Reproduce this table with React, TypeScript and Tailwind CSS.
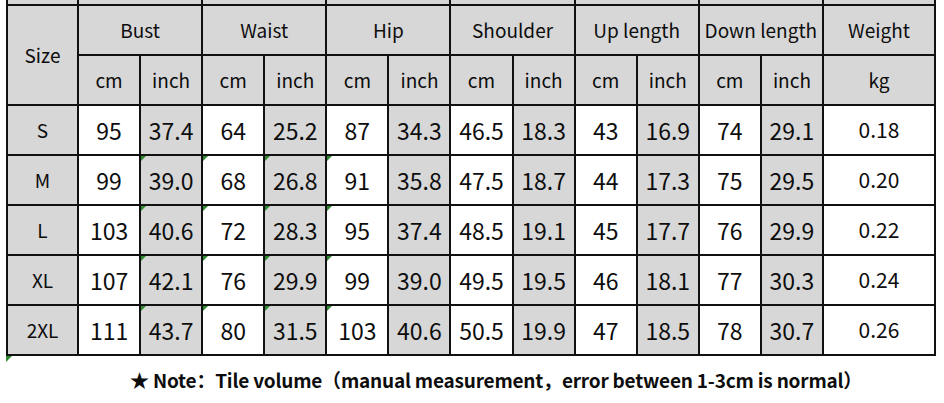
import React from "react";

const groups = ["Bust", "Waist", "Hip", "Shoulder", "Up length", "Down length"];

const rows: [string, string[], string][] = [
  ["S", ["95", "37.4", "64", "25.2", "87", "34.3", "46.5", "18.3", "43", "16.9", "74", "29.1"], "0.18"],
  ["M", ["99", "39.0", "68", "26.8", "91", "35.8", "47.5", "18.7", "44", "17.3", "75", "29.5"], "0.20"],
  ["L", ["103", "40.6", "72", "28.3", "95", "37.4", "48.5", "19.1", "45", "17.7", "76", "29.9"], "0.22"],
  ["XL", ["107", "42.1", "76", "29.9", "99", "39.0", "49.5", "19.5", "46", "18.1", "77", "30.3"], "0.24"],
  ["2XL", ["111", "43.7", "80", "31.5", "103", "40.6", "50.5", "19.9", "47", "18.5", "78", "30.7"], "0.26"],
];

const font = { fontFamily: '"Noto Sans CJK SC", "Noto Sans", sans-serif' };

function Tri() {
  return (
    <span className="absolute left-0 top-0 w-0 h-0 border-t-[5px] border-r-[5px] border-t-[#2f8a2f] border-r-transparent" />
  );
}

export default function App() {
  return (
    <div className="w-[944px] h-[403px] bg-white text-[#0d0d0d]" style={font}>
      <div className="ml-[6px] w-[930px] grid grid-cols-[69px_repeat(12,60.08px)_110px] grid-rows-[4px_repeat(7,48px)] gap-[2px] bg-[#111] px-[2px] pb-[2px]">
        {/* cut-off strip at top */}
        <div className="bg-[#d7d7d7]" />
        {groups.map((g) => (
          <div key={"t" + g} className="col-span-2 bg-[#d7d7d7]" />
        ))}
        <div className="bg-[#d7d7d7]" />

        {/* header row 1 */}
        <div className="row-span-2 bg-[#d7d7d7] flex items-center justify-center text-[19px]">Size</div>
        {groups.map((g) => (
          <div key={g} className="col-span-2 bg-[#d7d7d7] flex items-center justify-center text-[19px] whitespace-nowrap">
            {g}
          </div>
        ))}
        <div className="bg-[#d7d7d7] flex items-center justify-center text-[19px]">Weight</div>

        {/* header row 2 */}
        {groups.map((g) => (
          <React.Fragment key={"u" + g}>
            <div className="bg-[#d7d7d7] flex items-center justify-center text-[19px]">cm</div>
            <div className="bg-[#d7d7d7] flex items-center justify-center text-[19px]">inch</div>
          </React.Fragment>
        ))}
        <div className="bg-[#d7d7d7] flex items-center justify-center text-[19px]">kg</div>

        {/* body */}
        {rows.map(([size, vals, kg], ri) => (
          <React.Fragment key={size}>
            <div className="bg-[#d7d7d7] flex items-center justify-center text-[19px]">{size}</div>
            {vals.map((v, i) => (
              <div
                key={i}
                className={
                  "relative flex items-center justify-center text-[23px] " +
                  (i % 2 === 1 ? "bg-[#d7d7d7]" : "bg-white")
                }
              >
                {ri > 0 && i >= 1 && i <= 4 ? <Tri /> : null}
                {v}
              </div>
            ))}
            <div className="bg-white flex items-center justify-center text-[21px]">{kg}</div>
          </React.Fragment>
        ))}
      </div>
      <div className="relative h-0">
        <span className="absolute left-[6px] top-0 w-0 h-0 border-t-[6px] border-r-[6px] border-t-[#2f8a2f] border-r-transparent" />
      </div>
      <div className="pl-[130px] pt-[11px] text-[19px] font-bold leading-[26px] tracking-[-0.2px] whitespace-nowrap">
        ★ Note：Tile volume（manual measurement，error between 1-3cm is normal）
      </div>
    </div>
  );
}
